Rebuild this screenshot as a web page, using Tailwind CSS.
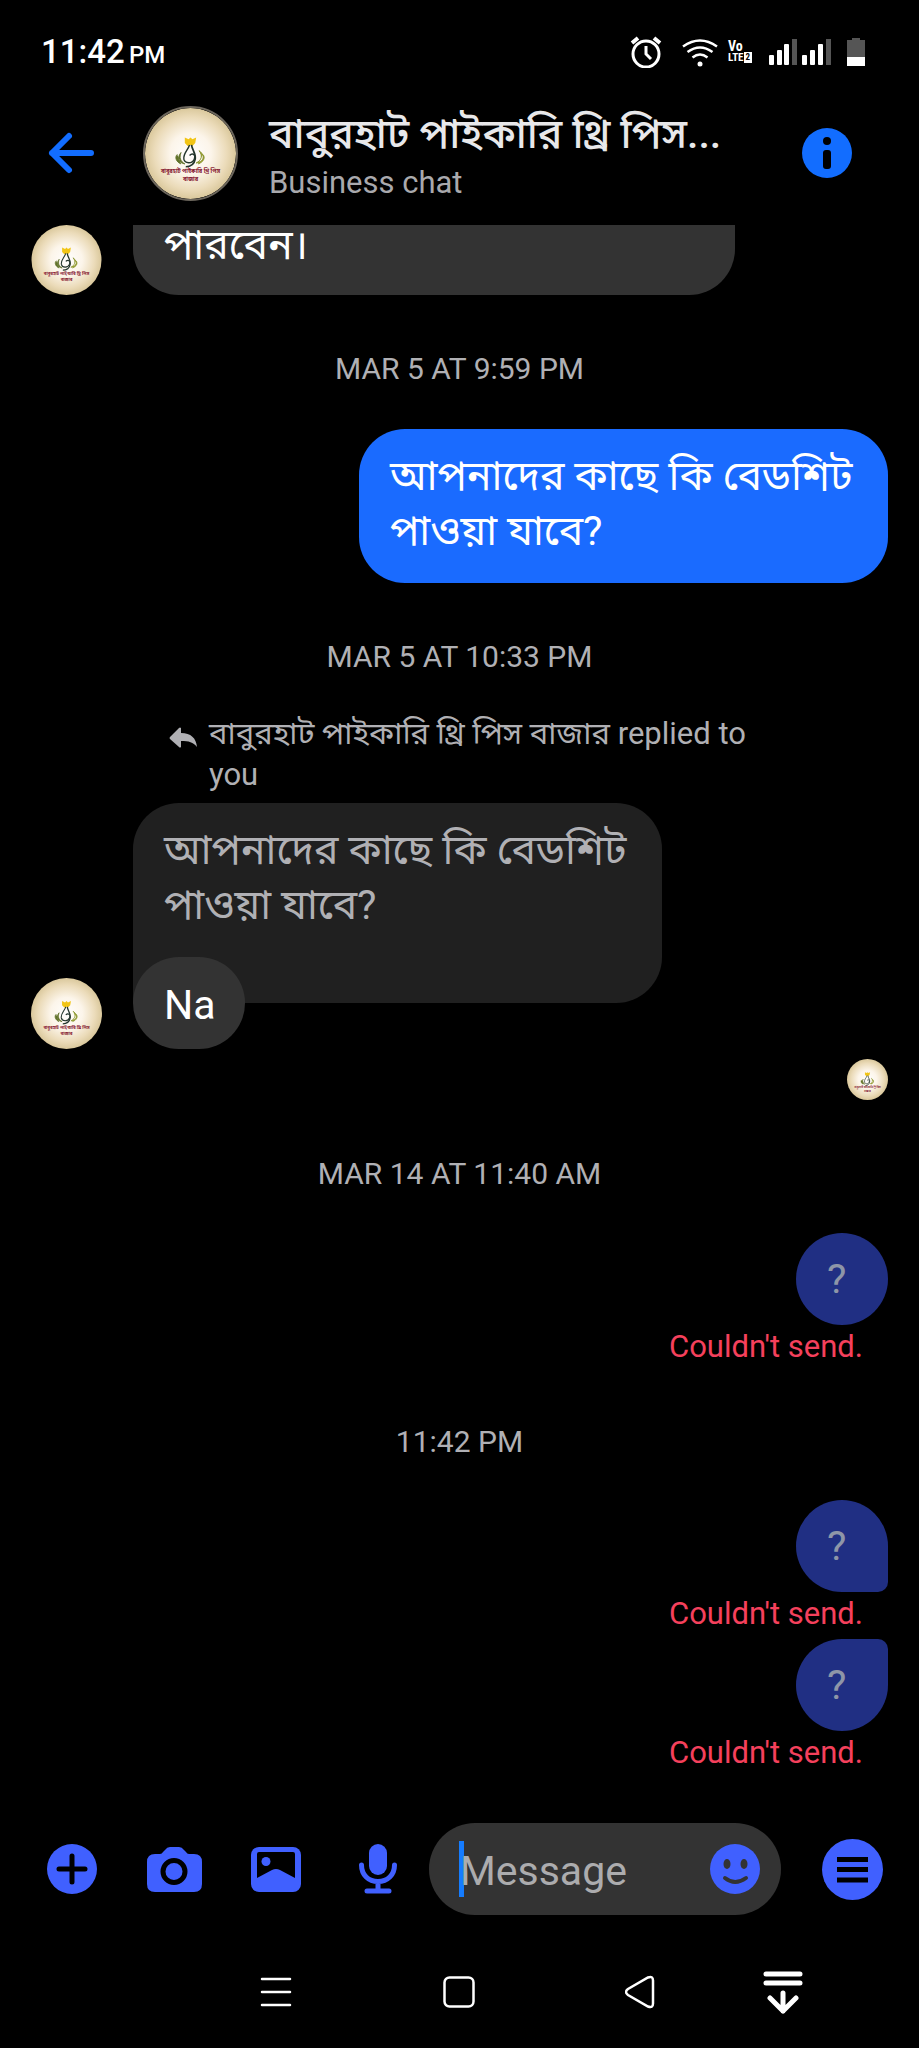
<!DOCTYPE html>
<html lang="bn">
<head>
    <meta charset="UTF-8">
    <meta name="viewport" content="width=device-width, initial-scale=1.0">
    <title>Business chat</title>
    <script src="https://cdn.jsdelivr.net/npm/@tailwindcss/browser@4"></script>
</head>
<body class="bg-black text-white min-h-screen flex flex-col font-[Roboto,'Noto_Sans_Bengali','Noto_Sans',sans-serif]">
    <!-- Shared shop logo -->
    <svg class="absolute w-0 h-0" aria-hidden="true">
        <defs>
            <radialGradient id="cream">
                <stop offset="0" stop-color="#fffefd"/>
                <stop offset="0.45" stop-color="#fcf5ea"/>
                <stop offset="0.8" stop-color="#ebdbb9"/>
                <stop offset="1" stop-color="#dac89c"/>
            </radialGradient>
        </defs>
        <symbol id="logo" viewBox="0 0 96 96">
            <circle cx="48" cy="48" r="48" fill="url(#cream)"/>
            <path d="M42 31l4 2 2-2 2 2 4-2-1 6-3 3-2-1-3 1-3-3z" fill="#f2c516"/>
            <path d="M47 39c-2 6-7 9-6 15 1 5 9 5 11 0 2-5-2-7-5-4" fill="none" stroke="#23352c" stroke-width="1.5"/>
            <path d="M49 39c1 6 5 9 4 15-1 5-4 8-10 8" fill="none" stroke="#23352c" stroke-width="1.8"/>
            <path d="M38 47c-2 5-1 9 4 12-6-1-9-6-4-12zM34 49c-3 3-1 8 4 10" fill="#62732b" stroke="#62732b"/>
            <path d="M57 45c4 5 3 10-3 13 7-1 11-7 3-13zM61 49c3 3 1 8-5 10" fill="#a8a92e" stroke="#84912c"/>
            <text x="48" y="69" text-anchor="middle" font-size="6" font-weight="700" fill="#872033">বাবুরহাট পাইকারি থ্রি পিস</text>
            <text x="48" y="77" text-anchor="middle" font-size="6" font-weight="700" fill="#872033">বাজার</text>
        </symbol>
    </svg>

    <!-- Status bar -->
    <div class="h-[81px] pt-[22px] pl-[41px] pr-[54px] flex items-center justify-between">
        <div class="text-[33px] font-medium leading-10">11:42 <span class="text-2xl -ml-1">PM</span></div>
        <div class="flex items-center">
            <svg class="w-8 h-8 mr-5" viewBox="0 0 32 32" fill="none" stroke="#fff">
                <circle cx="16" cy="18" r="13" stroke-width="3"/>
                <path d="M16 10v8l5 5" stroke-width="3"/>
                <path d="M2 7l6-5M30 7l-6-5" stroke-width="4"/>
            </svg>
            <svg class="w-9 h-8 mr-[10px]" viewBox="0 0 36 32" fill="none" stroke="#fff" stroke-width="2.5">
                <path d="M1 10.500q17-12 34 0M5.500 16q12.500-9 25 0M10.500 21.500q7.500-6 15 0"/>
                <circle cx="18" cy="28" r="2.500" fill="#fff" stroke="none"/>
            </svg>
            <div class="w-[41px] text-[11px] leading-3 font-bold font-['Liberation_Sans_Narrow','Roboto_Condensed','DejaVu_Sans_Condensed',sans-serif]">
                <div class="text-sm leading-3">Vo</div>
                <div class="flex items-center">LTE<span class="bg-white text-black text-[9px] leading-[11px] px-[2px]">2</span></div>
            </div>
            <svg class="w-[62px] h-[26px] mr-4" viewBox="0 0 62 26" fill="#fff">
                <rect x="0" y="16" width="5" height="10" rx="1"/><rect x="8" y="11" width="5" height="15" rx="1"/><rect x="15" y="5" width="5" height="21" rx="1"/>
                <rect x="23" y="0" width="5" height="26" fill="#555"/>
                <rect x="33" y="16" width="5" height="10" rx="1"/><rect x="41" y="11" width="5" height="15" rx="1"/><rect x="49" y="5" width="5" height="21" rx="1"/>
                <rect x="57" y="0" width="5" height="26" fill="#555"/>
            </svg>
            <svg class="w-[18px] h-7" viewBox="0 0 18 28">
                <path d="M5 0h8v2h5v17H0V2h5z" fill="#555"/>
                <path d="M0 19h18v9H0z" fill="#fff"/>
            </svg>
        </div>
    </div>

    <!-- Chat header -->
    <header class="h-[144px] pl-[47px] pr-[67px] flex items-center">
        <button type="button" aria-label="Back" class="mr-[48px]">
            <svg class="w-12 h-12" viewBox="0 0 48 48" fill="none" stroke="#126dff" stroke-width="6" stroke-linecap="round" stroke-linejoin="round"><path d="M44 24H5M22 7L5 24l17 17"/></svg>
        </button>
        <svg class="w-[95px] h-[95px] rounded-full border-2 border-[#6c665c] mr-[31px]"><use href="#logo"/></svg>
        <div class="flex-1 pt-1 whitespace-nowrap">
            <h1 class="text-[41px] leading-[55px] font-medium text-[#e8e8ea]">বাবুরহাট পাইকারি থ্রি পিস...</h1>
            <p class="text-[31px] leading-[42px] text-[#a9a9ad]">Business chat</p>
        </div>
        <button type="button" aria-label="Chat info">
            <svg class="w-[50px] h-[50px]" viewBox="0 0 50 50"><circle cx="25" cy="25" r="25" fill="#126dff"/><circle cx="25" cy="13" r="4" fill="#000"/><rect x="21" y="22" width="8" height="19" rx="3" fill="#000"/></svg>
        </button>
    </header>

    <!-- Messages -->
    <main class="flex-1 px-[31px]">
        <div class="flex items-end">
            <svg class="w-[71px] h-[70px] mr-[31px] shrink-0"><use href="#logo"/></svg>
            <p class="w-[602px] bg-[#333] rounded-b-[46px] px-[31px] pb-[30px] text-[41px] leading-[40px]">পারবেন।</p>
        </div>

        <div class="h-[130px] pt-4 mb-1 flex items-center justify-center text-[30px] text-[#b0b0b4]">MAR 5 AT 9:59 PM</div>

        <div class="flex justify-end">
            <p class="w-[529px] bg-[#1a6bff] rounded-[46px] px-[31px] pt-5 pb-6 text-[41px] leading-[55px]">আপনাদের কাছে কি বেডশিট<br>পাওয়া যাবে?</p>
        </div>

        <div class="h-[130px] pt-4 flex items-center justify-center text-[30px] text-[#b0b0b4]">MAR 5 AT 10:33 PM</div>

        <div class="ml-[138px] flex text-[31px] leading-[41px] text-[#b0b0b4]">
            <svg class="w-[29px] h-[22px] mt-[14px] mr-[11px] shrink-0" viewBox="0 0 29 22" fill="#b0b0b4"><path d="M12 1v5c10 0 15 5 16 14-4-5-8-6-16-6v6q-1 1-2 0L1 12q-1-1 0-2L10 1q1-1 2 0z"/></svg>
            <p>বাবুরহাট পাইকারি থ্রি পিস বাজার replied to<br>you</p>
        </div>

        <div class="mt-2 flex items-end">
            <svg class="w-[71px] h-[71px] mr-[31px] shrink-0"><use href="#logo"/></svg>
            <div>
                <p class="w-[529px] h-[200px] bg-[#202020] rounded-[46px] rounded-bl-none px-[31px] pt-5 text-[41px] leading-[55px] text-[#b0b0b4]">আপনাদের কাছে কি বেডশিট<br>পাওয়া যাবে?</p>
                <p class="relative -mt-[46px] w-[112px] bg-[#333] rounded-[46px] px-[31px] pt-6 pb-5 text-[41px] leading-[48px]">Na</p>
            </div>
        </div>

        <div class="mt-[10px] flex justify-end">
            <svg class="w-[41px] h-[41px]"><use href="#logo"/></svg>
        </div>

        <div class="h-[130px] pt-4 mb-[3px] flex items-center justify-center text-[30px] text-[#b0b0b4]">MAR 14 AT 11:40 AM</div>

        <div class="flex flex-col items-end">
            <p class="w-[92px] bg-[#202f83] rounded-[46px] px-[31px] py-[22px] text-[41px] leading-[48px] text-[#8e96a8]">?</p>
            <p class="mr-[25px] text-[31px] leading-[42px] pt-px text-[#f5405c]">Couldn't send.</p>
        </div>

        <div class="h-[130px] pt-4 mb-[2px] flex items-center justify-center text-[30px] text-[#b0b0b4]">11:42 PM</div>

        <div class="flex flex-col items-end">
            <p class="w-[92px] bg-[#202f83] rounded-[46px] rounded-br-[10px] px-[31px] py-[22px] text-[41px] leading-[48px] text-[#8e96a8]">?</p>
            <p class="mr-[25px] text-[31px] leading-[42px] pt-px text-[#f5405c]">Couldn't send.</p>
            <p class="mt-1 w-[92px] bg-[#202f83] rounded-[46px] rounded-tr-[10px] px-[31px] py-[22px] text-[41px] leading-[48px] text-[#8e96a8]">?</p>
            <p class="mr-[25px] text-[31px] leading-[42px] pt-px text-[#f5405c]">Couldn't send.</p>
        </div>
    </main>

    <!-- Composer -->
    <form class="pl-[21px] pr-9 flex items-center">
        <button type="button" aria-label="More actions" class="w-[102px] flex justify-center">
            <svg class="w-[50px] h-[50px]" viewBox="0 0 50 50"><circle cx="25" cy="25" r="25" fill="#4060ff"/><path d="M25 12v26M12 25h26" stroke="#000" stroke-width="5" stroke-linecap="round"/></svg>
        </button>
        <button type="button" aria-label="Camera" class="w-[102px] flex justify-center">
            <svg class="w-[55px] h-[50px]" viewBox="0 0 55 50"><path d="M8 10h5q2 0 3-2l2-2q2-3 5-3h9q3 0 5 3l2 2q1 2 3 2h5q8 0 8 8v22q0 8-8 8H8q-8 0-8-8V18q0-8 8-8z" fill="#4060ff"/><circle cx="27" cy="27.500" r="11" fill="none" stroke="#000" stroke-width="5"/></svg>
        </button>
        <button type="button" aria-label="Gallery" class="w-[102px] flex justify-center">
            <svg class="w-[50px] h-[50px]" viewBox="0 0 50 50"><rect x="0" y="3" width="50" height="45" rx="8" fill="#4060ff"/><path d="M8 8h34q2 0 2 2v24L29 26q-4-2-8 0L6 34V10q0-2 2-2z" fill="#000"/><circle cx="15" cy="17.500" r="4.500" fill="#4060ff"/></svg>
        </button>
        <button type="button" aria-label="Voice message" class="w-[102px] flex justify-center">
            <svg class="w-10 h-[50px]" viewBox="0 0 40 50"><rect x="11" y="0" width="18" height="31" rx="9" fill="#4060ff"/><path d="M3.500 21c0 10 7 16.500 16.500 16.500S36.500 31 36.500 21M20 38v9M9 47h22" fill="none" stroke="#4060ff" stroke-width="5" stroke-linecap="round"/></svg>
        </button>
        <div class="relative flex-1 min-w-0 h-[92px] bg-[#333] rounded-full pl-[31px] pr-[21px] flex items-center">
            <span class="absolute left-[30px] top-[18px] w-[5px] h-14 bg-[#157cff]"></span>
            <input type="text" aria-label="Message" placeholder="Message" class="relative flex-1 min-w-0 pt-1 text-[41px] leading-[48px] placeholder:text-[#acacae] outline-none">
            <button type="button" aria-label="Emoji">
                <svg class="w-[50px] h-[50px]" viewBox="0 0 50 50"><circle cx="25" cy="25" r="25" fill="#4060ff"/><ellipse cx="17" cy="20" rx="3.500" ry="5" fill="#333"/><ellipse cx="34" cy="20" rx="3.500" ry="5" fill="#333"/><path d="M15 34q10 8 21 0" fill="none" stroke="#333" stroke-width="4" stroke-linecap="round"/></svg>
            </button>
        </div>
        <button type="button" aria-label="Menu" class="ml-[41px]">
            <svg class="w-[61px] h-[61px]" viewBox="0 0 61 61"><circle cx="30.500" cy="30.500" r="30.500" fill="#4060ff"/><path d="M15 20.500h31M15 30.500h31M15 41h31" stroke="#000" stroke-width="5"/></svg>
        </button>
    </form>

    <!-- System navigation -->
    <nav class="h-[133px] pt-5 pl-[20%] flex items-center">
        <button type="button" aria-label="Recent apps" class="w-1/4 flex justify-center">
            <svg class="w-8 h-8" viewBox="0 0 32 32" stroke="#fff" stroke-width="2.500" stroke-linecap="round"><path d="M2 3h28M2 16h28M2 29h28"/></svg>
        </button>
        <button type="button" aria-label="Home" class="w-1/4 flex justify-center">
            <svg class="w-8 h-8" viewBox="0 0 32 32" fill="none" stroke="#fff" stroke-width="2.500"><rect x="1.500" y="1.500" width="29" height="29" rx="5"/></svg>
        </button>
        <button type="button" aria-label="Back" class="w-1/4 flex justify-center">
            <svg class="w-9 h-[34px]" viewBox="0 0 36 34" fill="none" stroke="#fff" stroke-width="2.500"><path d="M23 2.500q5-2 5 3v23q0 5-5 3L3 20q-4-3 0-6z"/></svg>
        </button>
        <button type="button" aria-label="Hide navigation" class="w-[96px] flex justify-center">
            <svg class="w-10 h-11" viewBox="0 0 40 44" fill="none" stroke="#fff" stroke-width="5" stroke-linecap="round" stroke-linejoin="round"><path d="M3 4h34M3 13h34M20 23v18M7 28l13 13 13-13"/></svg>
        </button>
    </nav>
</body>
</html>
